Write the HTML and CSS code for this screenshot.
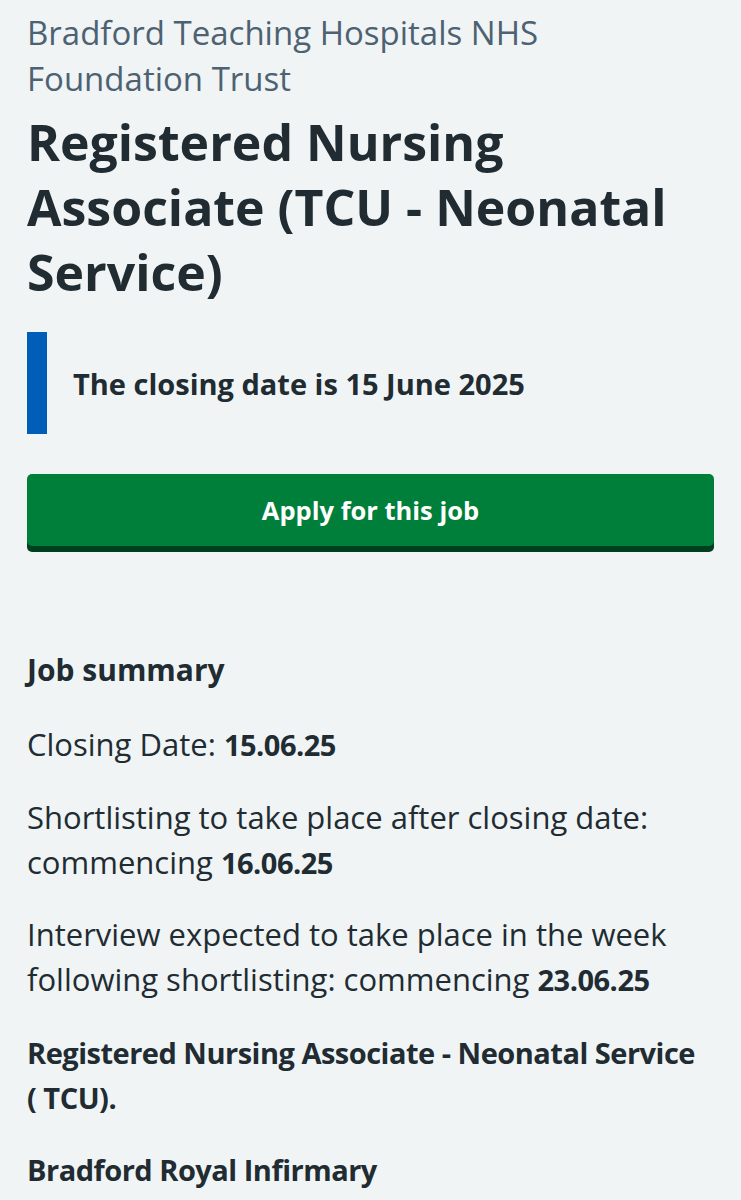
FILE: index.html
```html
<!DOCTYPE html>
<html lang="en">
<head>
<meta charset="utf-8">
<title>Registered Nursing Associate (TCU - Neonatal Service)</title>
<link rel="stylesheet" href="styles.css">
</head>
<body>
<main class="page">
  <span class="caption">Bradford Teaching Hospitals NHS Foundation Trust</span>
  <h1 class="title">Registered Nursing Associate (TCU - Neonatal Service)</h1>
  <div class="inset">
    <p class="inset-text">The closing date is 15 June 2025</p>
  </div>
  <a class="button" href="#">Apply for this job</a>
  <h2 class="subhead">Job summary</h2>
  <p class="para">Closing Date: <strong>15.06.25</strong></p>
  <p class="para">Shortlisting to take place after closing date: commencing <strong>16.06.25</strong></p>
  <p class="para">Interview expected to take place in the week following shortlisting: commencing <strong>23.06.25</strong></p>
  <p class="para"><strong>Registered Nursing Associate - Neonatal Service (&nbsp;TCU).</strong></p>
  <p class="para"><strong>Bradford Royal Infirmary</strong></p>
</main>
</body>
</html>
```

FILE: styles.css
```css
html, body {
  margin: 0;
  padding: 0;
  background: #f0f4f5;
}
body {
  font-family: "Open Sans", "Noto Sans", sans-serif;
  color: #212b32;
}
.page {
  padding: 10px 27px 0 27px;
}
.caption {
  display: block;
  font-size: 33px;
  line-height: 46px;
  color: #4c6272;
  margin-bottom: 8px;
}
.title {
  margin: 0 0 27px 0;
  font-size: 50px;
  line-height: 65px;
  font-weight: 700;
  letter-spacing: 0;
}
.inset {
  border-left: 20px solid #005eb8;
  height: 102px;
  display: flex;
  align-items: center;
  padding-left: 26px;
  margin-bottom: 40px;
}
.inset-text {
  margin: 0;
  font-size: 29px;
  font-weight: 700;
  line-height: 45px;
}
.button {
  display: flex;
  align-items: center;
  justify-content: center;
  height: 72px;
  background: #007f3b;
  color: #ffffff;
  border-radius: 5px;
  box-shadow: 0 6px 0 #00401e;
  text-decoration: none;
  font-size: 25.5px;
  font-weight: 700;
  margin-bottom: 101px;
}
.subhead {
  margin: 0 0 30px 0;
  font-size: 30px;
  line-height: 45px;
  font-weight: 700;
}
.para {
  margin: 0 0 27.5px 0;
  font-size: 31px;
  line-height: 45px;
}
.para strong {
  font-weight: 700;
  font-size: 29px;
  letter-spacing: -0.5px;
}
```
